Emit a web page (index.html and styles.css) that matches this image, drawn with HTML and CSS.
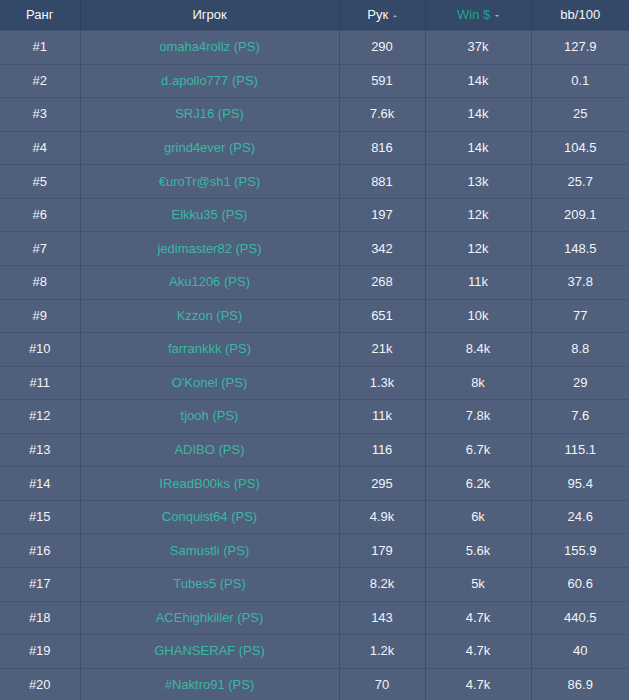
FILE: index.html
```html
<!DOCTYPE html>
<html lang="ru">
<head>
<meta charset="utf-8">
<link rel="stylesheet" href="styles.css">
</head>
<body>
<table class="rank">
  <colgroup>
    <col class="c1"><col class="c2"><col class="c3"><col class="c4"><col class="c5">
  </colgroup>
  <thead>
    <tr>
      <th>Ранг</th>
      <th>Игрок</th>
      <th>Рук <span class="caret up"></span></th>
      <th class="active">Win $ <span class="caret down"></span></th>
      <th>bb/100</th>
    </tr>
  </thead>
  <tbody>
    <tr><td>#1</td><td><a>omaha4rollz (PS)</a></td><td>290</td><td>37k</td><td>127.9</td></tr>
    <tr><td>#2</td><td><a>d.apollo777 (PS)</a></td><td>591</td><td>14k</td><td>0.1</td></tr>
    <tr><td>#3</td><td><a>SRJ16 (PS)</a></td><td>7.6k</td><td>14k</td><td>25</td></tr>
    <tr><td>#4</td><td><a>grind4ever (PS)</a></td><td>816</td><td>14k</td><td>104.5</td></tr>
    <tr><td>#5</td><td><a>€uroTr@sh1 (PS)</a></td><td>881</td><td>13k</td><td>25.7</td></tr>
    <tr><td>#6</td><td><a>Elkku35 (PS)</a></td><td>197</td><td>12k</td><td>209.1</td></tr>
    <tr><td>#7</td><td><a>jedimaster82 (PS)</a></td><td>342</td><td>12k</td><td>148.5</td></tr>
    <tr><td>#8</td><td><a>Aku1206 (PS)</a></td><td>268</td><td>11k</td><td>37.8</td></tr>
    <tr><td>#9</td><td><a>Kzzon (PS)</a></td><td>651</td><td>10k</td><td>77</td></tr>
    <tr><td>#10</td><td><a>farrankkk (PS)</a></td><td>21k</td><td>8.4k</td><td>8.8</td></tr>
    <tr><td>#11</td><td><a>O'Konel (PS)</a></td><td>1.3k</td><td>8k</td><td>29</td></tr>
    <tr><td>#12</td><td><a>tjooh (PS)</a></td><td>11k</td><td>7.8k</td><td>7.6</td></tr>
    <tr><td>#13</td><td><a>ADIBO (PS)</a></td><td>116</td><td>6.7k</td><td>115.1</td></tr>
    <tr><td>#14</td><td><a>IReadB00ks (PS)</a></td><td>295</td><td>6.2k</td><td>95.4</td></tr>
    <tr><td>#15</td><td><a>Conquist64 (PS)</a></td><td>4.9k</td><td>6k</td><td>24.6</td></tr>
    <tr><td>#16</td><td><a>Samustli (PS)</a></td><td>179</td><td>5.6k</td><td>155.9</td></tr>
    <tr><td>#17</td><td><a>Tubes5 (PS)</a></td><td>8.2k</td><td>5k</td><td>60.6</td></tr>
    <tr><td>#18</td><td><a>ACEhighkiller (PS)</a></td><td>143</td><td>4.7k</td><td>440.5</td></tr>
    <tr><td>#19</td><td><a>GHANSERAF (PS)</a></td><td>1.2k</td><td>4.7k</td><td>40</td></tr>
    <tr><td>#20</td><td><a>#Naktro91 (PS)</a></td><td>70</td><td>4.7k</td><td>86.9</td></tr>
  </tbody>
</table>
</body>
</html>
```
FILE: styles.css
```css
html, body {
  margin: 0;
  padding: 0;
  background: #4f5f7c;
}
body {
  font-family: "Liberation Sans", Arial, sans-serif;
  font-size: 13px;
  color: #f4f6f8;
}
.rank {
  width: 629px;
  border-collapse: collapse;
  table-layout: fixed;
}
.c1 { width: 80px; }
.c2 { width: 259px; }
.c3 { width: 86px; }
.c4 { width: 106px; }
.c5 { width: 98px; }
.rank th {
  background: #344867;
  color: #f6f7f9;
  font-weight: normal;
  height: 30px;
  padding: 0 4px;
  text-align: center;
  border-left: 1px solid #2d3f5c;
  border-bottom: 1px solid #3e5070;
  line-height: 28px;
}
.rank th:first-child, .rank td:first-child { border-left: none; }
.rank th.active { color: #1fa68c; }
.rank td {
  height: 32.57px;
  padding: 0 4px;
  text-align: center;
  border-left: 1px solid #3f4f6b;
  border-bottom: 1px solid #435370;
  line-height: 18px;
  color: #f2f4f7;
}
.rank td a {
  color: #3cb8a2;
  text-decoration: none;
}
.caret {
  display: inline-block;
  width: 0;
  height: 0;
  vertical-align: middle;
  margin-left: 1px;
  border-left: 2px solid transparent;
  border-right: 2px solid transparent;
}
.caret.up { border-bottom: 2px solid #a9b3c4; }
.caret.down { border-top: 2px solid #a9b3c4; }
```
